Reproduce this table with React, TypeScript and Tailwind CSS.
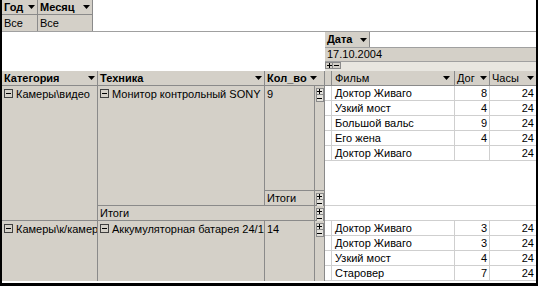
import type { ReactNode } from 'react';

type Row = { film: string; count: string; hours: string };

const firstGroup: Row[] = [
  { film: 'Доктор Живаго', count: '8', hours: '24' },
  { film: 'Узкий мост', count: '4', hours: '24' },
  { film: 'Большой вальс', count: '9', hours: '24' },
  { film: 'Его жена', count: '4', hours: '24' },
  { film: 'Доктор Живаго', count: '', hours: '24' },
];

const secondGroup: Row[] = [
  { film: 'Доктор Живаго', count: '3', hours: '24' },
  { film: 'Доктор Живаго', count: '3', hours: '24' },
  { film: 'Узкий мост', count: '4', hours: '24' },
  { film: 'Старовер', count: '7', hours: '24' },
];

// row start classes for the data rows, written out so tailwind picks them up
const firstRowStarts = ['row-start-2', 'row-start-3', 'row-start-4', 'row-start-5', 'row-start-6'];
const secondRowStarts = ['row-start-11', 'row-start-12', 'row-start-13', 'row-start-14'];

function Arrow() {
  return (
    <svg width="7" height="4" viewBox="0 0 7 4" className="shrink-0">
      <path d="M0 0h7L3.5 4z" fill="#000" />
    </svg>
  );
}

function Collapse() {
  return (
    <span className="mr-[3px] mt-[1px] inline-flex h-[9px] w-[9px] shrink-0 items-center justify-center border border-[#404040]">
      <span className="h-px w-[5px] bg-black" />
    </span>
  );
}

function Toggle() {
  return (
    <div className="flex flex-col items-center pt-[2px]">
      <span className="flex h-[7px] w-[8px] items-center justify-center border border-[#8a8a8a] bg-[#e4e2dc]">
        <svg width="5" height="5" viewBox="0 0 5 5">
          <path d="M2.5 0v5M0 2.5h5" stroke="#000" strokeWidth="1" />
        </svg>
      </span>
      <span className="flex h-[7px] w-[8px] items-center justify-center border border-t-0 border-[#8a8a8a] bg-[#e4e2dc]">
        <svg width="5" height="5" viewBox="0 0 5 5">
          <path d="M0 2.5h5" stroke="#000" strokeWidth="1" />
        </svg>
      </span>
    </div>
  );
}

function HeadCell({ label, bold = true, className = '' }: { label: string; bold?: boolean; className?: string }) {
  return (
    <div
      className={`flex items-center justify-between gap-[3px] overflow-hidden border-r border-b border-[#8a8a8a] bg-[#d4d0c8] px-[2px] ${
        bold ? 'font-bold' : ''
      } ${className}`}
    >
      <span className="whitespace-nowrap">{label}</span>
      <Arrow />
    </div>
  );
}

function MemberCell({ children, className = '' }: { children: ReactNode; className?: string }) {
  return (
    <div
      className={`flex items-start overflow-hidden whitespace-nowrap border-r border-b border-[#8a8a8a] bg-[#d4d0c8] pl-[2px] pt-[2px] leading-[12px] ${className}`}
    >
      {children}
    </div>
  );
}

function DataRows({ rows, starts }: { rows: Row[]; starts: string[] }) {
  return (
    <>
      {rows.map((r, i) => (
        <div key={i} className="contents">
          <div className={`col-start-5 border-r border-b border-[#cfcfcf] bg-white ${starts[i]}`} />
          <div className={`col-start-6 overflow-hidden whitespace-nowrap border-r border-b border-[#cfcfcf] bg-white pl-[3px] ${starts[i]}`}>
            {r.film}
          </div>
          <div className={`col-start-7 border-r border-b border-[#cfcfcf] bg-white pr-[2px] text-right ${starts[i]}`}>
            {r.count}
          </div>
          <div className={`col-start-8 border-b border-[#cfcfcf] bg-white pr-[2px] text-right ${starts[i]}`}>
            {r.hours}
          </div>
        </div>
      ))}
    </>
  );
}

function PivotGrid() {
  return (
    <div className="grid grid-cols-[96px_167px_50px_10px_7px_123px_35px_1fr] grid-rows-[repeat(14,15px)] leading-[14px]">
      {/* header row */}
      <HeadCell label="Категория" className="col-start-1 row-start-1" />
      <HeadCell label="Техника" className="col-start-2 row-start-1" />
      <HeadCell label="Кол_во" className="col-span-2 col-start-3 row-start-1 pr-[10px]" />
      <div className="col-start-5 row-start-1 border-r border-b border-[#8a8a8a] bg-[#d4d0c8]" />
      <HeadCell label="Фильм" bold={false} className="col-start-6 row-start-1 pl-[3px] pr-[4px]" />
      <HeadCell label="Дог" bold={false} className="col-start-7 row-start-1" />
      <HeadCell label="Часы" bold={false} className="col-start-8 row-start-1 border-r-0" />

      {/* first category */}
      <MemberCell className="col-start-1 row-span-9 row-start-2">
        <Collapse />
        Камеры\видео
      </MemberCell>
      <MemberCell className="col-start-2 row-span-8 row-start-2">
        <Collapse />
        Монитор контрольный SONY
      </MemberCell>
      <MemberCell className="col-start-3 row-span-7 row-start-2">9</MemberCell>
      <div className="col-start-4 row-span-7 row-start-2 border-r border-b border-[#8a8a8a] bg-[#d4d0c8]">
        <Toggle />
      </div>
      <MemberCell className="col-start-3 row-start-9 !pt-0 !leading-[15px]">Итоги</MemberCell>
      <div className="col-start-4 row-start-9 border-r border-b border-[#8a8a8a] bg-[#d4d0c8]">
        <Toggle />
      </div>
      <MemberCell className="col-span-2 col-start-2 row-start-10 !pt-0 !leading-[15px]">Итоги</MemberCell>
      <div className="col-start-4 row-start-10 border-r border-b border-[#8a8a8a] bg-[#d4d0c8]">
        <Toggle />
      </div>

      <DataRows rows={firstGroup} starts={firstRowStarts} />
      <div className="col-span-4 col-start-5 row-span-3 row-start-7 border-b border-[#cfcfcf] bg-white" />
      <div className="col-span-4 col-start-5 row-start-10 border-b border-[#cfcfcf] bg-white" />

      {/* second category */}
      <MemberCell className="col-start-1 row-span-4 row-start-11 border-b-0">
        <Collapse />
        Камеры\к/камеры
      </MemberCell>
      <MemberCell className="col-start-2 row-span-4 row-start-11 border-b-0">
        <Collapse />
        Аккумуляторная батарея 24/120
      </MemberCell>
      <MemberCell className="col-start-3 row-span-4 row-start-11 border-b-0">14</MemberCell>
      <div className="col-start-4 row-span-4 row-start-11 border-r border-[#8a8a8a] bg-[#d4d0c8]">
        <Toggle />
      </div>

      <DataRows rows={secondGroup} starts={secondRowStarts} />
    </div>
  );
}

export default function App() {
  return (
    <div className="h-[286px] w-[538px] overflow-hidden bg-white font-['Liberation_Sans',Arial,sans-serif] text-[11px] text-black">
      <div className="flex h-[286px] flex-col border-x-2 border-b-[3px] border-black">
        {/* page filters */}
        <div className="flex h-[32px] border-b border-[#a0a0a0]">
          <div className="flex w-[36px] flex-col">
            <HeadCell label="Год" className="h-[16px]" />
            <div className="h-[16px] border-r border-[#8a8a8a] bg-[#d4d0c8] px-[2px] leading-[16px]">Все</div>
          </div>
          <div className="flex w-[55px] flex-col">
            <HeadCell label="Месяц" className="h-[16px]" />
            <div className="h-[16px] border-r border-[#8a8a8a] bg-[#d4d0c8] px-[2px] leading-[16px]">Все</div>
          </div>
        </div>

        {/* column field area */}
        <div className="flex h-[39px]">
          <div className="w-[323px]" />
          <div className="flex flex-1 flex-col">
            <HeadCell label="Дата" className="h-[15px] w-[45px] border-b-0" />
            <div className="h-[15px] border-y border-[#a0a0a0] bg-[#d4d0c8] px-[2px] leading-[13px]">17.10.2004</div>
            <div className="flex h-[9px] items-start bg-[#e8e6e0]">
              <span className="flex h-[7px] w-[8px] items-center justify-center border border-[#8a8a8a] bg-[#d4d0c8]">
                <svg width="5" height="5" viewBox="0 0 5 5">
                  <path d="M2.5 0v5M0 2.5h5" stroke="#000" />
                </svg>
              </span>
              <span className="flex h-[7px] w-[8px] items-center justify-center border border-l-0 border-[#8a8a8a] bg-[#d4d0c8]">
                <svg width="5" height="5" viewBox="0 0 5 5">
                  <path d="M0 2.5h5" stroke="#000" />
                </svg>
              </span>
            </div>
          </div>
        </div>

        <PivotGrid />
      </div>
    </div>
  );
}
